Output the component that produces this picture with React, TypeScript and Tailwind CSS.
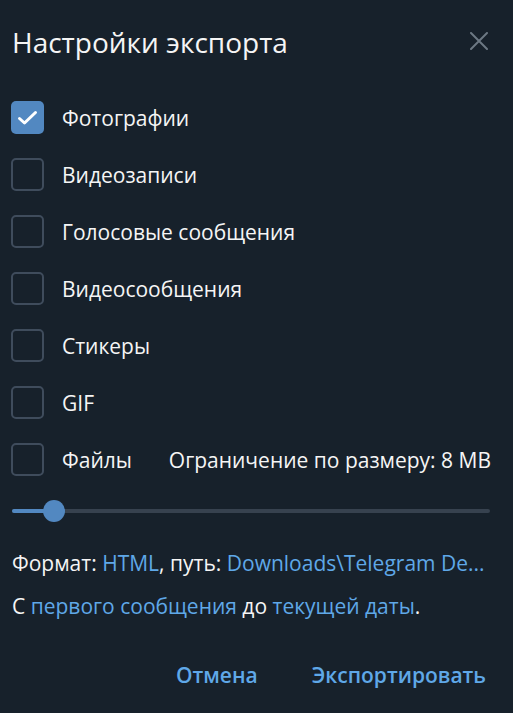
import React, { useState } from "react";

const items = [
    "Фотографии",
    "Видеозаписи",
    "Голосовые сообщения",
    "Видеосообщения",
    "Стикеры",
    "GIF",
];

const CheckBox = ({ checked }: { checked: boolean }) =>
    checked ? (
        <div className="w-[33px] h-[33px] rounded-[5px] bg-[#5288c1] shrink-0">
            <svg width="33" height="33" viewBox="0 0 33 33" fill="none">
                <path
                    d="M8.5 17.5 L13.5 22 L24.5 11.5"
                    stroke="white"
                    strokeWidth="3"
                    strokeLinecap="round"
                    strokeLinejoin="round"
                />
            </svg>
        </div>
    ) : (
        <div className="w-[33px] h-[33px] rounded-[5px] border-2 border-[#3f4c5c] shrink-0" />
    );

export default function App() {
    const [checked] = useState([true, false, false, false, false, false, false]);

    return (
        <div
            className="w-[513px] h-[713px] bg-[#17212b] text-[#f5f5f5] flex flex-col overflow-hidden"
            style={{ fontFamily: '"Open Sans", "Noto Sans", sans-serif' }}>
            <div className="flex items-center justify-between pl-[12px] pr-[25px] h-[84px]">
                <h1 className="text-[28px] leading-[36px] font-medium">
                    Настройки экспорта
                </h1>
                <svg width="18" height="18" viewBox="0 0 18 18" className="-mt-[2px]">
                    <path
                        d="M1 1 L17 17 M17 1 L1 17"
                        stroke="#6c7883"
                        strokeWidth="2"
                        strokeLinecap="round"
                    />
                </svg>
            </div>

            <div className="flex flex-col gap-[24px] px-[11px] pt-[17px]">
                {items.map((label, i) => (
                    <div key={label} className="flex items-center gap-[18px] h-[33px]">
                        <CheckBox checked={checked[i]} />
                        <span className="text-[21px] leading-[28px]">{label}</span>
                    </div>
                ))}
                <div className="flex items-center h-[33px]">
                    <CheckBox checked={false} />
                    <span className="text-[21px] leading-[28px] ml-[18px]">Файлы</span>
                    <span className="text-[21px] leading-[28px] ml-auto mr-[11px] whitespace-nowrap">
                        Ограничение по размеру: 8 MB
                    </span>
                </div>
            </div>

            <div className="relative ml-[12px] mr-[23px] mt-[24px] h-[22px] flex items-center">
                <div className="w-full h-[4px] rounded-full bg-[#37424f]" />
                <div className="absolute left-0 h-[4px] w-[42px] rounded-full bg-[#5288c1]" />
                <div className="absolute left-[31px] w-[22px] h-[22px] rounded-full bg-[#5288c1]" />
            </div>

            <div className="px-[12px] pt-[27px] text-[21px] leading-[28px] flex flex-col gap-[15px]">
                <p className="whitespace-nowrap">
                    Формат: <span className="text-[#5fa8e8]">HTML</span>, путь:{" "}
                    <span className="text-[#5fa8e8]">Downloads\Telegram De...</span>
                </p>
                <p>
                    С <span className="text-[#5fa8e8]">первого сообщения</span> до{" "}
                    <span className="text-[#5fa8e8]">текущей даты</span>.
                </p>
            </div>

            <div className="flex justify-end gap-[54px] pr-[27px] pt-[41px] text-[21px] leading-[28px] font-semibold text-[#5fa8e8]">
                <button>Отмена</button>
                <button>Экспортировать</button>
            </div>
        </div>
    );
}
